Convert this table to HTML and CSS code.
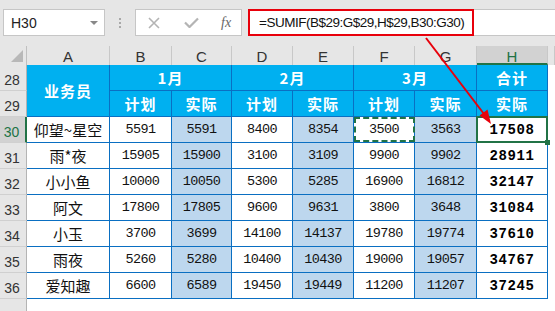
FILE: index.html
```html
<!DOCTYPE html>
<html>
<head>
  <meta charset="utf-8">
  <title>SUMIF 按表头汇总</title>
  <link rel="stylesheet" href="styles.css">
</head>
<body>
  <div class="formula-bar">
    <div class="name-box"><span>H30</span><span class="caret"></span></div>
    <div class="grip"><i></i><i></i><i></i></div>
    <div class="buttons">
      <svg class="ico-x" width="12" height="12" viewBox="0 0 12 12"><path d="M1 1L11 11M11 1L1 11" stroke="#b4b4b4" stroke-width="1.6" fill="none"/></svg>
      <svg class="ico-ok" width="15" height="11" viewBox="0 0 15 11"><path d="M1 5.5L5.5 10L14 1.5" stroke="#b4b4b4" stroke-width="2.2" fill="none"/></svg>
      <span class="fx">fx</span>
    </div>
    <div class="formula">
      <div class="formula-text">=SUMIF(B$29:G$29,H$29,B30:G30)</div>
    </div>
  </div>

  <div class="sheet">
    <div class="corner"></div>
    <div class="col-hd">A</div>
    <div class="col-hd">B</div>
    <div class="col-hd">C</div>
    <div class="col-hd">D</div>
    <div class="col-hd">E</div>
    <div class="col-hd">F</div>
    <div class="col-hd">G</div>
    <div class="col-hd current">H</div>
    <div class="col-hd"></div>

    <div class="row-hd">28</div>
    <div class="cell hd tall">业务员</div>
    <div class="cell hd wide">1月</div>
    <div class="cell hd wide">2月</div>
    <div class="cell hd wide">3月</div>
    <div class="cell hd">合计</div>
    <div class="blank"></div>

    <div class="row-hd">29</div>
    <div class="cell hd">计划</div>
    <div class="cell hd">实际</div>
    <div class="cell hd">计划</div>
    <div class="cell hd">实际</div>
    <div class="cell hd">计划</div>
    <div class="cell hd">实际</div>
    <div class="cell hd">实际</div>
    <div class="blank"></div>

    <div class="row-hd current">30</div>
    <div class="cell name">仰望~星空</div>
    <div class="cell">5591</div>
    <div class="cell alt">5591</div>
    <div class="cell">8400</div>
    <div class="cell alt">8354</div>
    <div class="cell copied">3500</div>
    <div class="cell alt">3563</div>
    <div class="cell total active">17508</div>
    <div class="blank"></div>

    <div class="row-hd">31</div>
    <div class="cell name">雨*夜</div>
    <div class="cell">15905</div>
    <div class="cell alt">15900</div>
    <div class="cell">3100</div>
    <div class="cell alt">3109</div>
    <div class="cell">9900</div>
    <div class="cell alt">9902</div>
    <div class="cell total">28911</div>
    <div class="blank"></div>

    <div class="row-hd">32</div>
    <div class="cell name">小小鱼</div>
    <div class="cell">10000</div>
    <div class="cell alt">10050</div>
    <div class="cell">5300</div>
    <div class="cell alt">5285</div>
    <div class="cell">16900</div>
    <div class="cell alt">16812</div>
    <div class="cell total">32147</div>
    <div class="blank"></div>

    <div class="row-hd">33</div>
    <div class="cell name">阿文</div>
    <div class="cell">17800</div>
    <div class="cell alt">17805</div>
    <div class="cell">9600</div>
    <div class="cell alt">9631</div>
    <div class="cell">3800</div>
    <div class="cell alt">3648</div>
    <div class="cell total">31084</div>
    <div class="blank"></div>

    <div class="row-hd">34</div>
    <div class="cell name">小玉</div>
    <div class="cell">3700</div>
    <div class="cell alt">3699</div>
    <div class="cell">14100</div>
    <div class="cell alt">14137</div>
    <div class="cell">19780</div>
    <div class="cell alt">19774</div>
    <div class="cell total">37610</div>
    <div class="blank"></div>

    <div class="row-hd">35</div>
    <div class="cell name">雨夜</div>
    <div class="cell">5260</div>
    <div class="cell alt">5280</div>
    <div class="cell">10400</div>
    <div class="cell alt">10430</div>
    <div class="cell">19000</div>
    <div class="cell alt">19057</div>
    <div class="cell total">34767</div>
    <div class="blank"></div>

    <div class="row-hd">36</div>
    <div class="cell name">爱知趣</div>
    <div class="cell">6600</div>
    <div class="cell alt">6589</div>
    <div class="cell">19450</div>
    <div class="cell alt">19449</div>
    <div class="cell">11200</div>
    <div class="cell alt">11207</div>
    <div class="cell total">37245</div>
    <div class="blank"></div>

    <div class="row-hd last"></div>
    <div class="blank rest"></div>
  </div>

  <!-- callout from the formula to the result cell -->
  <svg class="arrow" width="555" height="311" viewBox="0 0 555 311">
    <line x1="426" y1="38" x2="484" y2="114" stroke="#e8000b" stroke-width="2"/>
    <polygon points="491,124 479.5,115.5 487.5,109.5" fill="#e8000b"/>
  </svg>
</body>
</html>
```

FILE: styles.css
```css
body {
    margin: 0;
    height: 311px;
    overflow: hidden;
    position: relative;
    background: #e6e6e6;
    font-family: "Liberation Sans", Arial, sans-serif;
}

/* formula bar */

.formula-bar {
    display: flex;
    height: 46px;
    box-sizing: border-box;
    padding: 9px 0 10px 3px;
}

.name-box {
    width: 102px;
    box-sizing: border-box;
    border: 1px solid #c6c6c6;
    background: #fff;
    display: flex;
    align-items: center;
    justify-content: space-between;
    padding: 0 6px 0 7px;
    font-size: 14px;
    color: #222;
}

.caret {
    border-top: 4px solid #888;
    border-left: 4px solid transparent;
    border-right: 4px solid transparent;
}

.grip {
    width: 30px;
    display: flex;
    flex-direction: column;
    align-items: center;
    justify-content: center;
    gap: 2px;
}

.grip i {
    width: 2px;
    height: 2px;
    background: #a8a8a8;
}

.buttons {
    width: 107px;
    box-sizing: border-box;
    border: 1px solid #c6c6c6;
    background: #fff;
    display: flex;
    align-items: center;
    padding-left: 12px;
}

.ico-ok {
    margin-left: 24px;
}

.fx {
    margin-left: 22px;
    font-family: "Liberation Serif", serif;
    font-style: italic;
    font-size: 14px;
    color: #666;
}

.formula {
    flex: 1;
    margin-left: 6px;
    background: #fff;
    border-top: 1px solid #c6c6c6;
    border-bottom: 1px solid #c6c6c6;
    display: flex;
}

.formula-text {
    width: 226px;
    box-sizing: border-box;
    margin: -1px 0;
    border: 2px solid #e8000b;
    padding-left: 9px;
    font-size: 13.5px;
    letter-spacing: -0.5px;
    line-height: 23px;
    color: #111;
}

/* sheet grid */

.sheet {
    display: grid;
    grid-template-columns: 27px 83px 62px 60px 61px 61px 61px 62px 71px 1fr;
    grid-template-rows: 19px repeat(9, 26px) 1fr;
    height: 265px;
    background: #fff;
}

.corner {
    background: #e6e6e6;
    border-right: 1px solid #c0c0c0;
    position: relative;
}

.corner:after {
    content: "";
    position: absolute;
    right: 3px;
    bottom: 3px;
    border-left: 12px solid transparent;
    border-bottom: 12px solid #b8b8b8;
}

.col-hd {
    background: #e6e6e6;
    border-right: 1px solid #c8c8c8;
    text-align: center;
    font-size: 15px;
    line-height: 22px;
    color: #333;
}

.col-hd.current {
    background: #d2d2d2;
    border-bottom: 2px solid #217346;
    color: #217346;
}

.row-hd {
    background: #e6e6e6;
    border-right: 1px solid #b4b4b4;
    border-bottom: 1px solid #d0d0d0;
    display: flex;
    align-items: center;
    justify-content: center;
    padding: 4px 2px 0 0;
    font-size: 14px;
    color: #333;
}

.row-hd.current {
    background: #d2d2d2;
    border-right: 2px solid #217346;
    color: #217346;
}

.row-hd.last {
    border-bottom: none;
}

.cell {
    border-right: 1px solid #0a6fc2;
    border-bottom: 1px solid #0a6fc2;
    display: flex;
    align-items: center;
    justify-content: center;
    position: relative;
    font-family: "Liberation Mono", "Noto Sans CJK SC", monospace;
    font-size: 13.5px;
    letter-spacing: -0.6px;
    color: #111;
}

.cell.hd {
    background: #00b0f0;
    color: #fff;
    font-family: "Noto Sans CJK SC", sans-serif;
    font-weight: bold;
    font-size: 15px;
    letter-spacing: 1px;
}

.cell.tall {
    grid-row: span 2;
}

.cell.wide {
    grid-column: span 2;
}

.cell.name {
    font-family: "Noto Sans CJK SC", sans-serif;
    font-size: 15px;
    letter-spacing: 0;
}

.cell.alt {
    background: #bdd7ee;
}

.cell.total {
    font-size: 14px;
    font-weight: bold;
    letter-spacing: 0.6px;
    color: #000;
}

.cell.active:after {
    content: "";
    position: absolute;
    top: -1px;
    left: -1px;
    right: -1px;
    bottom: -1px;
    border: 2px solid #217346;
}

.cell.active:before {
    content: "";
    position: absolute;
    right: -3px;
    bottom: -3px;
    width: 5px;
    height: 5px;
    background: #217346;
    z-index: 1;
}

.cell.copied:after {
    content: "";
    position: absolute;
    top: 0;
    left: 0;
    right: -1px;
    bottom: 0;
    border: 2px dashed #217346;
}

.blank.rest {
    grid-column: span 9;
}

.arrow {
    position: absolute;
    left: 0;
    top: 0;
    pointer-events: none;
}
```
